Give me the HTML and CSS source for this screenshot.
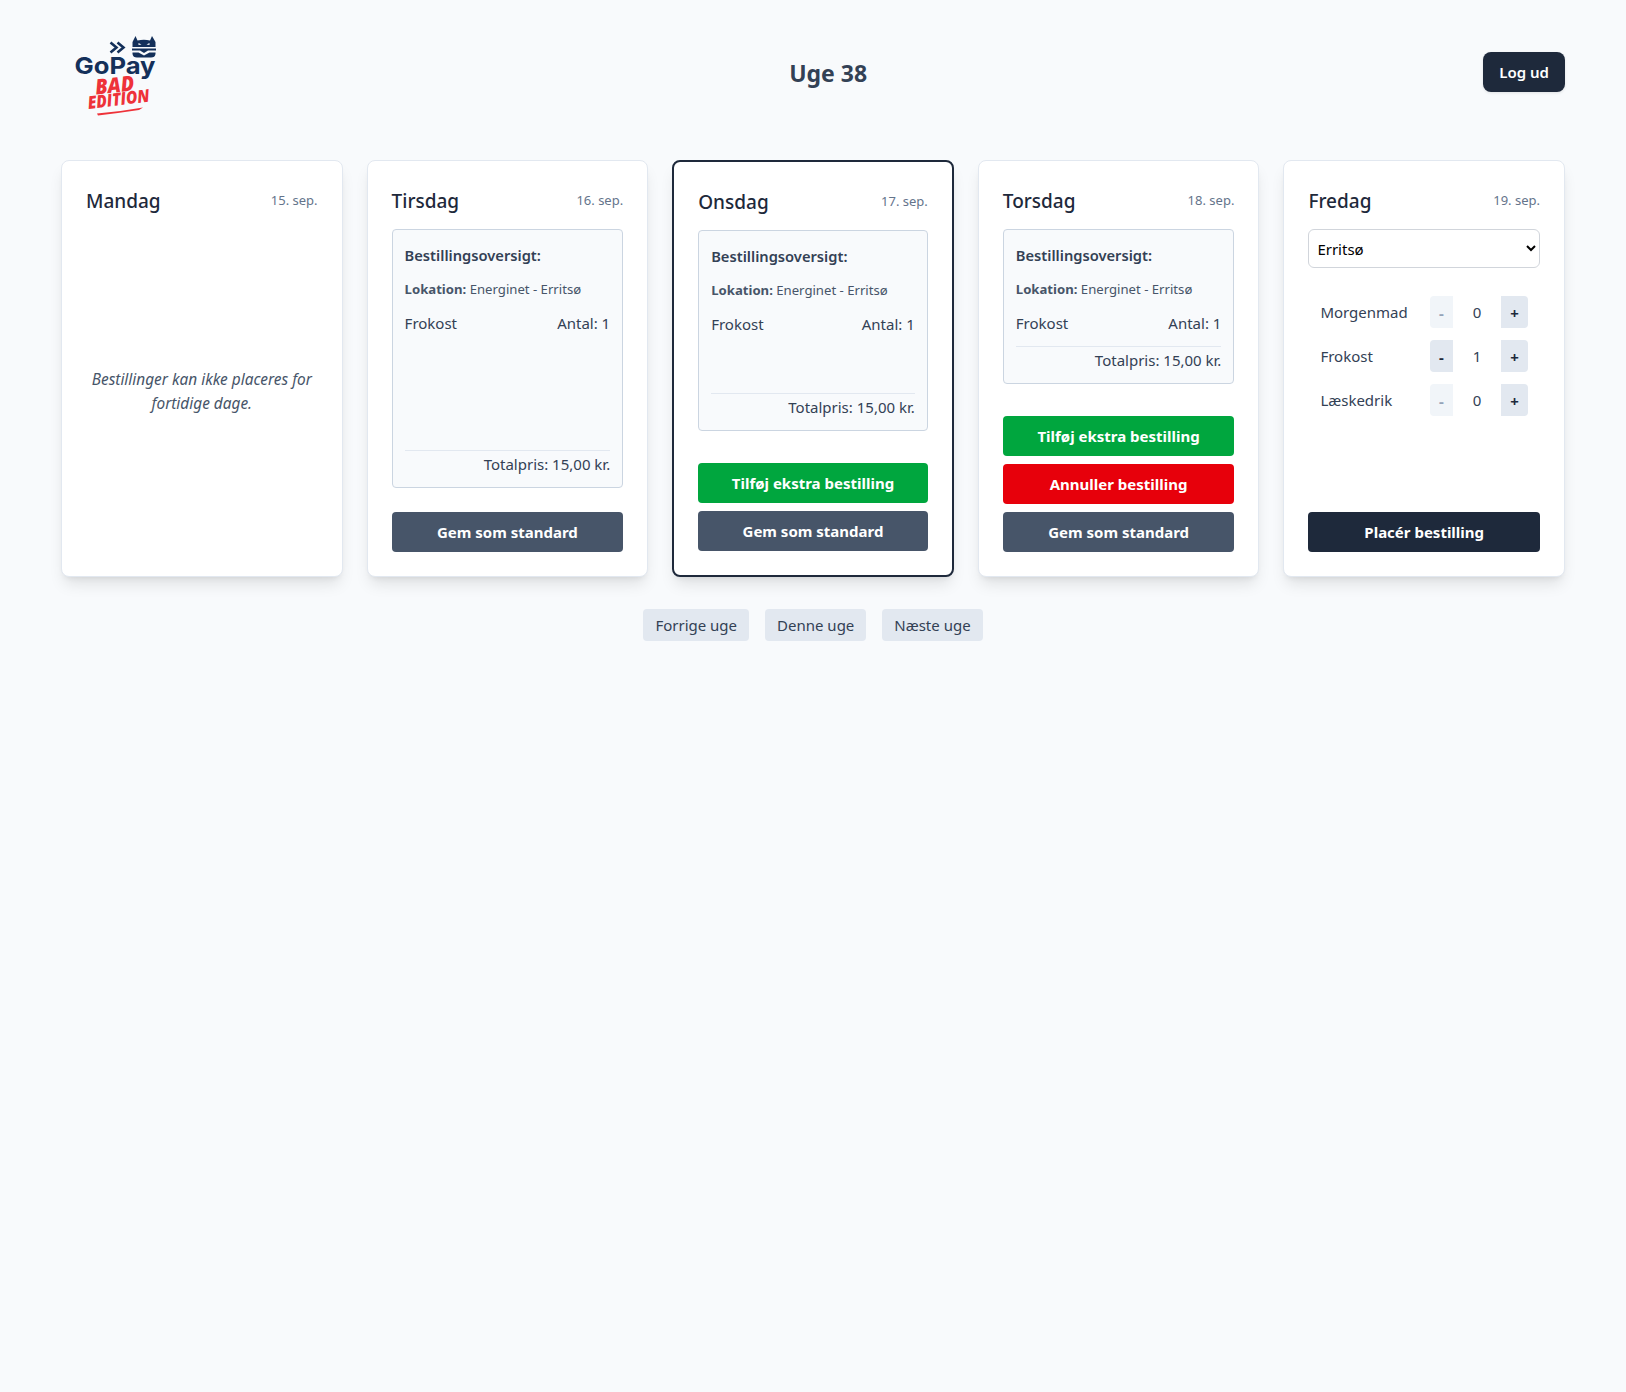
FILE: index.html
```html
<!DOCTYPE html>
<html lang="da">
<head>
<meta charset="utf-8">
<title>GoPay - Uge 38</title>
<link rel="stylesheet" href="styles.css">
</head>
<body>
<main class="page">
  <header class="topbar">
    <svg class="logo" viewBox="0 0 112 112" role="img" aria-label="GoPay Bad Edition">
      <path class="logo-chev" d="M49.500 26.500l6 5-6 5M56.500 26.500l6 5-6 5"/>
      <path class="logo-cat" d="M74.500 20l2 4.500q6.500-1.500 12.500 0l2-4.500 3.500 6v5h-23v-5z"/>
      <path class="logo-cat" d="M71 32.500h24v2h-8l-4 2.500-4-2.500h-8zM71.500 36.500h6l5.500 3 5.500-3h6V38q-.5 3.500-4.500 3.500H76q-4 0-4.500-3.500z"/>
      <path class="logo-eye" d="M77.500 27l3 1.500-3 .5zM88.500 27l-3 1.500 3 .5z"/>
      <text class="logo-go" x="13.500" y="57.800" textLength="81" lengthAdjust="spacingAndGlyphs">GoPay</text>
      <text class="logo-bad" x="35" y="78.500" textLength="39" lengthAdjust="spacingAndGlyphs" transform="rotate(-6 35 78.500)">BAD</text>
      <text class="logo-ed" x="27.500" y="93" textLength="62" lengthAdjust="spacingAndGlyphs" transform="rotate(-7 27.500 93)">EDITION</text>
      <path class="logo-swoosh" d="M36 97.500q24-2 46-6l-4 2.500q-20 3-41 5.500z"/>
    </svg>
    <h1 class="week">Uge 38</h1>
    <button class="logout">Log ud</button>
  </header>

  <section class="days">
    <article class="day">
      <div class="day-head"><h2>Mandag</h2><span class="date">15. sep.</span></div>
      <div class="past"><p>Bestillinger kan ikke placeres for fortidige dage.</p></div>
    </article>

    <article class="day">
      <div class="day-head"><h2>Tirsdag</h2><span class="date">16. sep.</span></div>
      <div class="summary">
        <h3>Bestillingsoversigt:</h3>
        <p class="loc"><b>Lokation:</b> Energinet - Erritsø</p>
        <div class="items items-tall"><div class="item"><span>Frokost</span><span>Antal: 1</span></div></div>
        <div class="total">Totalpris: 15,00 kr.</div>
      </div>
      <div class="actions"><button class="btn slate">Gem som standard</button></div>
    </article>

    <article class="day today">
      <div class="day-head"><h2>Onsdag</h2><span class="date">17. sep.</span></div>
      <div class="summary">
        <h3>Bestillingsoversigt:</h3>
        <p class="loc"><b>Lokation:</b> Energinet - Erritsø</p>
        <div class="items items-mid"><div class="item"><span>Frokost</span><span>Antal: 1</span></div></div>
        <div class="total">Totalpris: 15,00 kr.</div>
      </div>
      <div class="actions">
        <button class="btn green">Tilføj ekstra bestilling</button>
        <button class="btn slate">Gem som standard</button>
      </div>
    </article>

    <article class="day">
      <div class="day-head"><h2>Torsdag</h2><span class="date">18. sep.</span></div>
      <div class="summary">
        <h3>Bestillingsoversigt:</h3>
        <p class="loc"><b>Lokation:</b> Energinet - Erritsø</p>
        <div class="items"><div class="item"><span>Frokost</span><span>Antal: 1</span></div></div>
        <div class="total">Totalpris: 15,00 kr.</div>
      </div>
      <div class="actions">
        <button class="btn green">Tilføj ekstra bestilling</button>
        <button class="btn red">Annuller bestilling</button>
        <button class="btn slate">Gem som standard</button>
      </div>
    </article>

    <article class="day">
      <div class="day-head"><h2>Fredag</h2><span class="date">19. sep.</span></div>
      <select class="place"><option>Erritsø</option></select>
      <div class="rows">
        <div class="row"><span class="name">Morgenmad</span><div class="stepper"><button class="minus off">-</button><span class="qty">0</span><button class="plus">+</button></div></div>
        <div class="row"><span class="name">Frokost</span><div class="stepper"><button class="minus">-</button><span class="qty">1</span><button class="plus">+</button></div></div>
        <div class="row"><span class="name">Læskedrik</span><div class="stepper"><button class="minus off">-</button><span class="qty">0</span><button class="plus">+</button></div></div>
      </div>
      <div class="actions"><button class="btn dark">Placér bestilling</button></div>
    </article>
  </section>

  <nav class="weeknav">
    <button>Forrige uge</button>
    <button>Denne uge</button>
    <button>Næste uge</button>
  </nav>
</main>
</body>
</html>
```
FILE: styles.css
```css
* { box-sizing: border-box; }
html, body { margin: 0; padding: 0; }
body {
  background: #f8fafc;
  color: #1e293b;
  font-family: "Noto Sans", sans-serif;
  font-size: 15px;
  line-height: 24px;
  min-height: 1392px;
}
button { font-family: inherit; cursor: pointer; border: 0; }
h1, h2, h3, p { margin: 0; }

.page { width: 1536px; margin: 0 auto; padding: 16px 16px 16px; }

.topbar { display: flex; align-items: center; justify-content: space-between; margin-bottom: 32px; }
.logo { width: 112px; height: 112px; display: block; }
.logo-chev { fill: none; stroke: #14305a; stroke-width: 2.600; }
.logo-cat { fill: #14305a; }
.logo-eye { fill: #f8fafc; }
.logo-go { font: 700 23.500px Inter, sans-serif; fill: #14305a; }
.logo-bad { font: italic 800 21px "Open Sans", sans-serif; fill: #ee3239; }
.logo-ed { font: italic 800 17.500px "Open Sans", sans-serif; fill: #ee3239; }
.logo-swoosh { fill: #ee3239; }
.week { font-size: 23px; line-height: 32px; padding-top: 2px; font-weight: 700; color: #334155; }
.logout { height: 40px; padding: 0 16px; border-radius: 8px; background: #1e293b; color: #fff; font-size: 15px; font-weight: 600; box-shadow: 0 1px 3px rgba(0,0,0,.1); }

.days { display: grid; grid-template-columns: repeat(5, minmax(0, 1fr)); gap: 24px; }
.day {
  height: 417px;
  display: flex;
  flex-direction: column;
  padding: 24px;
  background: #fff;
  border: 1px solid #e2e8f0;
  border-radius: 8px;
  box-shadow: 0 10px 15px -3px rgba(0,0,0,.1), 0 4px 6px -4px rgba(0,0,0,.1);
}
.today { border: 2px solid #1e293b; }
.day-head { display: flex; justify-content: space-between; align-items: center; padding-top: 2px; margin-bottom: 14px; }
.day-head h2 { font-size: 19px; line-height: 28px; font-weight: 500; color: #1e293b; }
.date { font-size: 13px; line-height: 20px; padding-bottom: 2px; color: #64748b; }

.past { flex: 1; display: flex; align-items: center; justify-content: center; padding-top: 2px; text-align: center; }
.past p { font-size: 15.400px; font-style: italic; color: #475569; }

.summary { padding: 13px 12px 12px; background: #f8fafc; border: 1px solid #cbd5e1; border-radius: 4px; display: flex; flex-direction: column; }
.summary h3 { font-size: 14.700px; line-height: 24px; font-weight: 600; color: #334155; margin-bottom: 12px; }
.loc { font-size: 13.150px; line-height: 20px; color: #475569; margin-bottom: 12px; }
.loc b { font-weight: 700; }
.items-tall { min-height: 128px; }
.items-mid { min-height: 70px; }
.item { display: flex; justify-content: space-between; color: #334155; }
.total { margin-top: 11px; padding-top: 2px; line-height: 22px; border-top: 1px solid #e2e8f0; text-align: right; color: #334155; }

.actions { margin-top: auto; display: flex; flex-direction: column; gap: 8px; }
.btn { height: 40px; width: 100%; padding: 0; border-radius: 4px; color: #fff; font-size: 15px; font-weight: 700; }
.slate { background: #475569; }
.green { background: #00a63e; }
.red { background: #e7000b; }
.dark { background: #1e293b; }

.place { height: 39px; width: 100%; padding: 0 4px; background: #fff; border: 1px solid #d1d5db; border-radius: 6px; color: #000; font-family: inherit; font-size: 15px; }
.rows { margin-top: 28px; display: flex; flex-direction: column; gap: 12px; padding: 0 12px; }
.row { display: flex; align-items: center; justify-content: space-between; height: 32px; }
.name { color: #334155; }
.stepper { display: flex; align-items: center; }
.stepper button { height: 32px; padding: 2px 0 0; font-size: 15px; font-weight: 700; color: #1e293b; background: #e2e8f0; }
.minus { width: 23px; border-radius: 4px 0 0 4px; }
.plus { width: 27px; border-radius: 0 4px 4px 0; }
.stepper .off { background: #f1f5f9; color: #94a3b8; }
.qty { width: 48px; text-align: center; color: #334155; }

.weeknav { display: flex; justify-content: center; gap: 16px; margin-top: 32px; }
.weeknav button { height: 32px; padding: 0 12px; border-radius: 4px; background: #e2e8f0; color: #334155; font-size: 15px; }
```
